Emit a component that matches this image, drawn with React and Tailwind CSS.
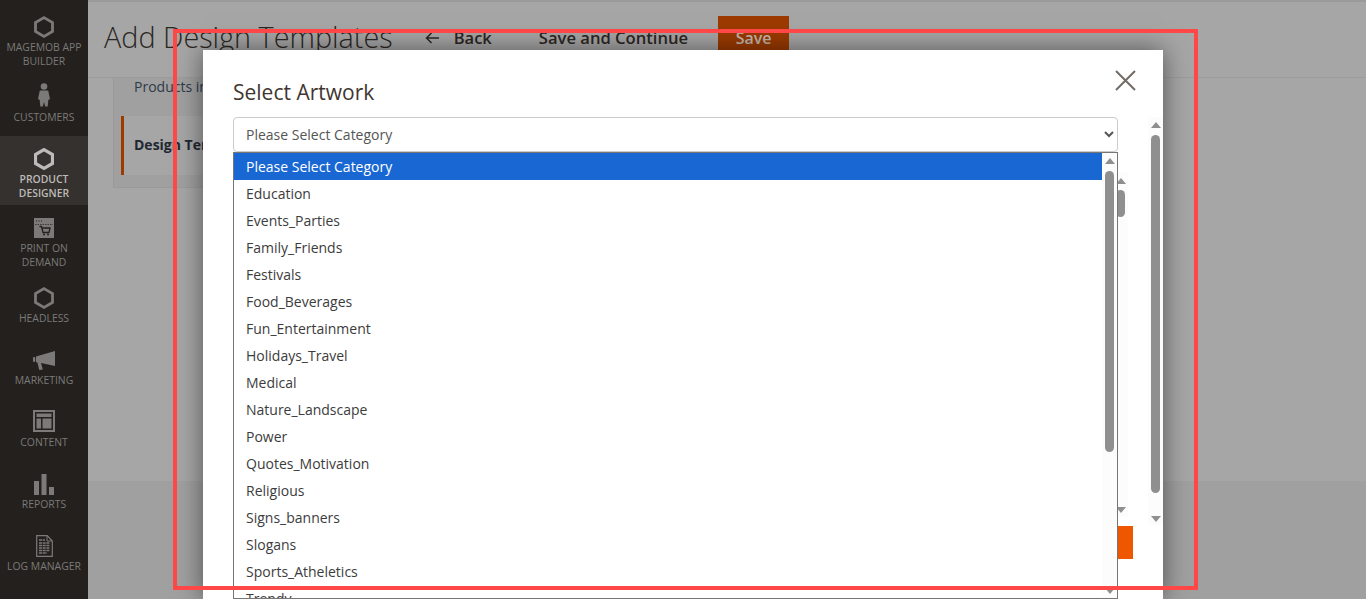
import React from "react";

const Hex = ({ sw = 2.8, className = "" }) => (
  <svg className={className} width="20" height="22" viewBox="0 0 20 22">
    <path d="M10 1.600 18.500 6.500v9L10 20.400 1.500 15.500v-9z" fill="none" stroke="currentColor" strokeWidth={sw} />
  </svg>
);

const Customer = () => (
  <svg className="-mt-1" width="12" height="24" viewBox="0 0 12 24" fill="currentColor">
    <circle cx="6" cy="3.500" r="3.300" />
    <path d="M1.800 7.500h8.400L12 16l-1.700 1-.6 6.500H7.200L6 19l-1.200 4.500H2.300L1.700 17 0 16z" />
  </svg>
);

const PrintIcon = () => (
  <svg width="20" height="20" viewBox="0 0 20 20">
    <rect width="20" height="20" fill="currentColor" />
    <path d="M1 6.500h18" stroke="#23201d" strokeWidth="0.7" strokeDasharray="1.500 1" />
    <path d="M2 3h1M4.500 3h1M7 3h1" stroke="#23201d" />
    <path d="M5.500 8.500h2l1.500 6h6l1-4.500H8" fill="none" stroke="#23201d" strokeWidth="1.300" />
    <circle cx="10" cy="16.600" r="1" fill="#23201d" />
    <circle cx="14" cy="16.600" r="1" fill="#23201d" />
  </svg>
);

const Megaphone = () => (
  <svg width="22" height="19" viewBox="0 0 22 19" fill="currentColor">
    <path d="M22 0v15L8 12l1.800 6.600-3.600.4L4.400 11.500 3 11.200V5.500z" />
    <rect x="0" y="6" width="2.200" height="5" rx="1" />
  </svg>
);

const ContentIcon = () => (
  <svg className="-mt-0.5" width="22" height="22" viewBox="0 0 22 22" fill="currentColor">
    <path fillRule="evenodd" d="M0 0h22v22H0zM2 2v18h18V2z" />
    <rect x="3.500" y="3.500" width="15" height="3.500" />
    <rect x="3.500" y="8.500" width="4.500" height="10" />
    <rect x="9.500" y="8.500" width="9" height="10" />
  </svg>
);

const Reports = () => (
  <svg width="20" height="21" viewBox="0 0 20 21" fill="currentColor">
    <rect x="0" y="7" width="5" height="14" />
    <rect x="7.500" y="0" width="5" height="21" />
    <rect x="15" y="13" width="5" height="8" />
  </svg>
);

const LogIcon = () => (
  <svg width="17" height="22" viewBox="0 0 17 22">
    <path d="M.7.700h10.500l5.100 5.300v15.300H.7z" fill="none" stroke="currentColor" strokeWidth="1.200" />
    <path d="M11 1v5h5" fill="none" stroke="currentColor" />
    <path d="M3 5h6M3 8h11M3 10.500h11M3 13h11M3 15.500h11M3 18h8" stroke="currentColor" strokeWidth="1.300" strokeDasharray="3 0.700" />
  </svg>
);

const navItems = [
  { label: ["MAGEMOB APP", "BUILDER"], icon: <Hex />, h: "h-[70px]" },
  { label: ["CUSTOMERS"], icon: <Customer />, h: "h-[62px]" },
  { label: ["PRODUCT", "DESIGNER"], icon: <Hex sw={3.2} />, h: "h-[69px]", active: true },
  { label: ["PRINT ON", "DEMAND"], icon: <PrintIcon />, h: "h-[70px]" },
  { label: ["HEADLESS"], icon: <Hex />, h: "h-[62px]" },
  { label: ["MARKETING"], icon: <Megaphone />, h: "h-[62px]" },
  { label: ["CONTENT"], icon: <ContentIcon />, h: "h-[62px]" },
  { label: ["REPORTS"], icon: <Reports />, h: "h-[62px]" },
  { label: ["LOG MANAGER"], icon: <LogIcon />, h: "h-[62px]" },
  // next entry is cut off by the window, only its tip shows
  { label: [], icon: <Hex className="mt-1" />, h: "h-[62px]" },
];

const categories = [
  "Education",
  "Events_Parties",
  "Family_Friends",
  "Festivals",
  "Food_Beverages",
  "Fun_Entertainment",
  "Holidays_Travel",
  "Medical",
  "Nature_Landscape",
  "Power",
  "Quotes_Motivation",
  "Religious",
  "Signs_banners",
  "Slogans",
  "Sports_Atheletics",
  "Trendy",
];

const Up = () => <div className="h-0 w-0 shrink-0 border-x-[5px] border-b-[6px] border-x-transparent border-b-[#8f8f8f]" />;
const Down = () => <div className="h-0 w-0 shrink-0 border-x-[5px] border-t-[6px] border-x-transparent border-t-[#8f8f8f]" />;

function App() {
  return (
    <div
      className="relative flex h-[599px] w-[1366px] overflow-hidden bg-[#a6a6a6]"
      style={{ fontFamily: '"Open Sans", sans-serif' }}
    >
      {/* sidebar */}
      <aside className="flex w-[88px] shrink-0 flex-col bg-[#23201d] pt-1 text-[#7c7a78]">
        {navItems.map((item, i) => (
          <div
            key={i}
            className={`flex shrink-0 flex-col items-center ${item.h} ${item.active ? "bg-[#35312e] text-[#bdbbb9]" : ""}`}
          >
            <div className="flex h-9 shrink-0 items-center justify-center pt-[10px]">{item.icon}</div>
            {item.label.map((line) => (
              <div
                key={line}
                className={`whitespace-nowrap text-[10.400px] leading-[14px] ${item.active ? "font-semibold" : ""}`}
              >
                {line}
              </div>
            ))}
          </div>
        ))}
      </aside>

      {/* page behind the modal */}
      <main className="flex min-w-0 flex-1 flex-col">
        <header className="flex h-[78px] shrink-0 items-start border-b border-t-2 border-[#9a9a9a] border-b-[#9c9c9c] pl-4 pt-[14px]">
          <h1 className="-mt-px text-[28.800px] font-light leading-[44px] text-[#2c2622]">Add Design Templates</h1>
          <div className="ml-8 flex h-[44px] items-center gap-[15px] text-[16.500px] font-semibold text-[#2c2622]">
            <svg width="14" height="12" viewBox="0 0 14 12" fill="none" stroke="currentColor" strokeWidth="1.500">
              <path d="M14 6H1.500M6.500 1 1.500 6l5 5" />
            </svg>
            <span>Back</span>
          </div>
          <span className="ml-[47px] text-[16.600px] font-semibold leading-[44px] text-[#2c2622]">Save and Continue</span>
          <div className="ml-[30px] flex h-11 w-[71px] items-center justify-center bg-[#9c3a00] text-base font-semibold text-[#c5b8ae]">
            Save
          </div>
        </header>
        <div className="flex-1 pl-[25px]">
          <div className="h-[110px] w-[400px] border-b border-l border-[#9a9a9a] bg-[#a0a0a0] pl-[7px]">
            <div className="pl-[13px] text-sm leading-[18px] text-[#2e3a48]">Products in Template</div>
            <div className="mt-5 flex h-[59px] items-center border-l-[3px] border-[#9c3a00] bg-[#a6a6a6] pb-0.5 pl-[10px] text-sm font-bold text-[#202833]">
              Design Templates
            </div>
          </div>
        </div>
        <footer className="h-[118px] shrink-0 bg-[#a0a0a0]" />
      </main>

      {/* modal */}
      <div className="absolute bottom-0 left-[203px] top-[50px] w-[960px] bg-white pl-[30px] pt-[28px] shadow-[0_0_24px_rgba(0,0,0,0.5)]">
        <h2 className="text-[21px] leading-[29px] text-[#41362f]">Select Artwork</h2>
        <svg className="absolute left-[912px] top-[20px]" width="21" height="21" viewBox="0 0 21 21" stroke="#736c66" strokeWidth="2">
          <path d="M1 1l19 19M20 1 1 20" />
        </svg>
        <select className="mt-[10px] block h-[35px] w-[885px] rounded-[4px] border border-[#cccccc] bg-white pl-2 text-sm text-[#555555]">
          <option>Please Select Category</option>
        </select>

        {/* scrollbars of the panel under the list */}
        <div className="absolute left-[910px] top-[122px] flex h-[345px] w-[15px] flex-col items-center bg-[#fcfcfc] pb-1 pt-[6px]">
          <Up />
          <div className="mt-[6px] h-[27px] w-[9px] rounded-full bg-[#8f8f8f]" />
          <div className="mt-auto"><Down /></div>
        </div>
        <div className="absolute left-[945px] top-[67px] flex h-[408px] w-[15px] flex-col items-center bg-[#fcfcfc] pb-[3px] pt-[5px]">
          <Up />
          <div className="mt-[7px] h-[358px] w-[9px] rounded-full bg-[#8f8f8f]" />
          <div className="mt-auto"><Down /></div>
        </div>
        <div className="absolute left-[915px] top-[476px] h-[33px] w-[15px] bg-[#ef5600]" />

        {/* open dropdown */}
        <div className="absolute left-[30px] top-[102px] flex h-[447px] w-[885px] overflow-hidden border border-[#767676] bg-white text-sm text-[#3c3c3c]">
          <ul className="min-w-0 flex-1">
            <li className="flex h-[27px] items-center bg-[#1967d2] pl-3 text-white">Please Select Category</li>
            {categories.map((c) => (
              <li key={c} className="flex h-[27px] items-center pl-3">{c}</li>
            ))}
          </ul>
          <div className="flex w-[15px] flex-col items-center bg-[#fcfcfc] pb-1 pt-[5px]">
            <Up />
            <div className="mt-[7px] h-[281px] w-[9px] rounded-full bg-[#8f8f8f]" />
            <div className="mt-auto"><Down /></div>
          </div>
        </div>
      </div>

      {/* highlight box */}
      <div className="absolute left-[173px] top-[29px] h-[561px] w-[1025px] border-4 border-[#ff4747]" />
    </div>
  );
}

export default App;
